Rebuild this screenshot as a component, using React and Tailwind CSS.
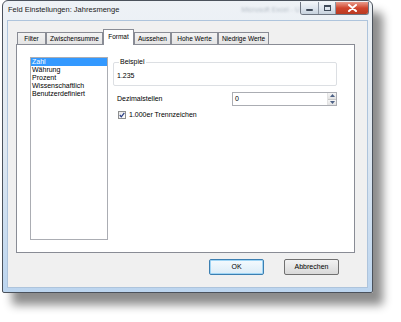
import React from 'react';

const tabs = [
    { label: 'Filter', w: 'w-[29px]' },
    { label: 'Zwischensumme', w: 'w-[57px]' },
    { label: 'Format', w: 'w-[31px]', active: true },
    { label: 'Aussehen', w: 'w-[37px]' },
    { label: 'Hohe Werte', w: 'w-[47px]' },
    { label: 'Niedrige Werte', w: 'w-[51px]' },
];

const formats = ['Zahl', 'Währung', 'Prozent', 'Wissenschaftlich', 'Benutzerdefiniert'];

function CaptionButtons() {
    return (
        <div className="flex h-[13px] mt-[1px] rounded-b-[3px] overflow-hidden border border-t-0 border-[#6d7480]">
            <div className="w-[18px] h-full flex items-center justify-center bg-gradient-to-b from-[#f3f6f9] via-[#dfe6ee] to-[#c7d2de] border-r border-[#8c95a2]">
                <div className="w-[7px] h-[2px] mt-[4px] bg-[#3f4a59] rounded-[1px]" />
            </div>
            <div className="w-[17px] h-full flex items-center justify-center bg-gradient-to-b from-[#f3f6f9] via-[#dfe6ee] to-[#c7d2de] border-r border-[#8c95a2]">
                <div className="w-[7px] h-[6px] border border-[#3f4a59] border-t-2" />
            </div>
            <div className="w-[32px] h-full flex items-center justify-center bg-gradient-to-b from-[#e79a8a] via-[#d0442c] to-[#b93a22]">
                <svg width="9" height="8" viewBox="0 0 9 8">
                    <path d="M1 1 L8 7 M8 1 L1 7" stroke="#ffffff" strokeWidth="2" strokeLinecap="round" />
                </svg>
            </div>
        </div>
    );
}

export default function App() {
    return (
        <div className="w-[401px] h-[322px] bg-white pl-[2px] font-['Liberation_Sans',Arial,sans-serif] text-black overflow-hidden">
            <div className="w-[371px] h-[293px] flex flex-col rounded-t-[6px] rounded-b-[2px] border border-[#4b525c] bg-gradient-to-b from-[#eef2f6] via-[#dfe8f1] to-[#bcd5ef] shadow-[10px_12px_10px_rgba(0,0,0,0.45)]">
                {/* title bar */}
                <div className="h-[19px] flex items-start pl-[5px] pr-[3px] shrink-0 whitespace-nowrap">
                    <span className="shrink-0 mt-[4px] text-[7.5px] leading-[10px] text-[#1b1b1b]">Feld Einstellungen: Jahresmenge</span>
                    <span className="shrink-0 ml-[122px] mt-[4px] text-[7px] text-[#8f99a6] blur-[1px] opacity-60">Microsoft Excel - U</span>
                    <div className="ml-auto shrink-0">
                        <CaptionButtons />
                    </div>
                </div>

                {/* frame + client */}
                <div className="flex-1 px-[4px] pb-[4px]">
                    <div className="h-full border border-[#aec4dc] bg-[#f0f0f0] flex flex-col">
                        {/* tabs */}
                        <div className="flex items-end h-[16px] mt-[8px] pl-[9px] -mb-px relative z-10 text-[6.5px] leading-[8px]">
                            {tabs.map((t) =>
                                t.active ? (
                                    <div key={t.label} className={`${t.w} h-[16px] bg-white border border-b-0 border-[#898c95] flex justify-center pt-[3px]`}>
                                        {t.label}
                                    </div>
                                ) : (
                                    <div key={t.label} className={`${t.w} h-[12px] mb-px bg-gradient-to-b from-[#f3f3f3] to-[#e4e4e4] border border-b-0 border-[#898c95] flex justify-center pt-[2px] whitespace-nowrap`}>
                                        {t.label}
                                    </div>
                                )
                            )}
                        </div>

                        {/* tab panel */}
                        <div className="ml-[8px] w-[339px] h-[209px] bg-white border border-[#898c95] flex pl-[13px] pt-[12px] text-[7px] leading-[8px]">
                            <div className="w-[78px] h-[183px] border border-[#abadb3] bg-white">
                                {formats.map((f, i) => (
                                    <div key={f} className={`h-[8px] pl-[1px] whitespace-nowrap ${i === 0 ? 'bg-[#3399ff] text-white' : ''}`}>
                                        {f}
                                    </div>
                                ))}
                            </div>

                            <div className="ml-[5px] w-[224px] flex flex-col">
                                {/* Beispiel group */}
                                <div className="mt-[5px] h-[24px] border border-[#dcdfe3] rounded-[2px] relative pl-[3px] pt-[9px]">
                                    <span className="absolute -top-[5px] left-[5px] bg-white px-[1px]">Beispiel</span>
                                    1.235
                                </div>

                                {/* Dezimalstellen */}
                                <div className="mt-[6px] flex items-center h-[14px]">
                                    <span className="pl-[4px]">Dezimalstellen</span>
                                    <div className="ml-auto w-[105px] h-[14px] border border-[#abadb3] bg-white flex items-center">
                                        <span className="pl-[2px] flex-1">0</span>
                                        <div className="w-[9px] h-full flex flex-col border-l border-[#e3e3e3]">
                                            <div className="flex-1 flex items-center justify-center bg-gradient-to-b from-[#f6f6f6] to-[#e2e2e2] border-b border-[#c8c8c8]">
                                                <svg width="5" height="3" viewBox="0 0 5 3"><path d="M0 3 L2.5 0 L5 3 Z" fill="#4d6185" /></svg>
                                            </div>
                                            <div className="flex-1 flex items-center justify-center bg-gradient-to-b from-[#f6f6f6] to-[#e2e2e2]">
                                                <svg width="5" height="3" viewBox="0 0 5 3"><path d="M0 0 L2.5 3 L5 0 Z" fill="#4d6185" /></svg>
                                            </div>
                                        </div>
                                    </div>
                                </div>

                                {/* checkbox */}
                                <div className="mt-[4px] flex items-center h-[10px] pl-[5px]">
                                    <div className="w-[8px] h-[8px] border border-[#8e8f8f] bg-gradient-to-br from-[#e6e6e6] to-[#ffffff] flex items-center justify-center">
                                        <svg width="6" height="6" viewBox="0 0 6 6"><path d="M0.8 3 L2.3 4.8 L5.3 0.8" stroke="#283c84" strokeWidth="1.2" fill="none" /></svg>
                                    </div>
                                    <span className="ml-[3px]">1.000er Trennzeichen</span>
                                </div>
                            </div>
                        </div>

                        {/* buttons */}
                        <div className="mt-[6px] flex pl-[201px] gap-[20px] text-[7px]">
                            <button className="w-[55px] h-[16px] rounded-[2px] border border-[#3c7fb1] bg-gradient-to-b from-[#f4fafe] to-[#dcecf7] shadow-[inset_0_0_0_1px_#9fd5f5] flex items-center justify-center">
                                OK
                            </button>
                            <button className="w-[55px] h-[16px] rounded-[2px] border border-[#707070] bg-gradient-to-b from-[#f2f2f2] to-[#d9d9d9] flex items-center justify-center">
                                Abbrechen
                            </button>
                        </div>
                    </div>
                </div>
            </div>
        </div>
    );
}
